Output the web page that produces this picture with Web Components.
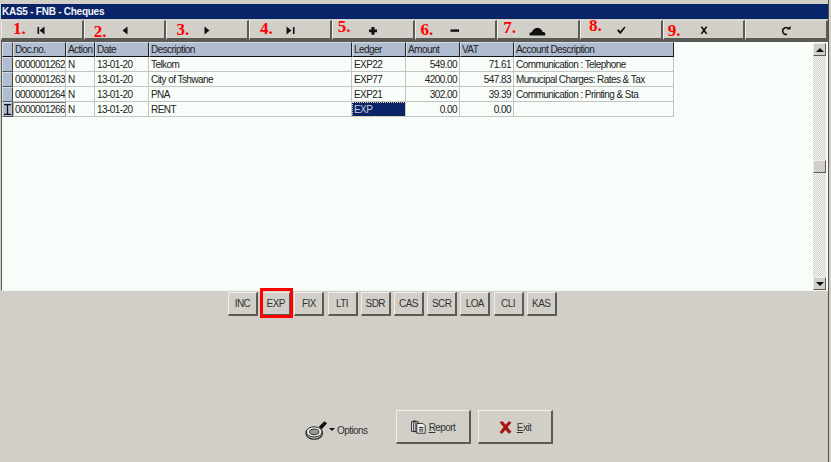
<!DOCTYPE html>
<html><head><meta charset="utf-8">
<style>
html,body{margin:0;padding:0;background:#d1cfc8;width:831px;height:462px;overflow:hidden;font-family:"Liberation Sans",Arial,sans-serif;font-size:10px;letter-spacing:-.56px;color:#222}
</style></head><body>
<app-window>
  <title-bar>KAS5 - FNB - Cheques</title-bar>
  <tool-bar>
    <tool-button num="1." nx="11" ny="0" icon="first"></tool-button>
    <tool-button num="2." nx="9" ny="3" icon="prev"></tool-button>
    <tool-button num="3." nx="9" ny="1" icon="next"></tool-button>
    <tool-button num="4." nx="10" ny="0" icon="last"></tool-button>
    <tool-button num="5." nx="5" ny="-2" icon="plus"></tool-button>
    <tool-button num="6." nx="5" ny="1" icon="minus"></tool-button>
    <tool-button num="7." nx="5" ny="-1" icon="cloud"></tool-button>
    <tool-button num="8." nx="8" ny="-3" icon="check"></tool-button>
    <tool-button num="9." nx="4" ny="2" icon="cross"></tool-button>
    <tool-button icon="redo"></tool-button>
  </tool-bar>
  <grid-pane></grid-pane>
  <tab-strip>
    <tab-button>INC</tab-button><tab-button marked>EXP</tab-button><tab-button>FIX</tab-button><tab-button>LTI</tab-button><tab-button>SDR</tab-button><tab-button>CAS</tab-button><tab-button>SCR</tab-button><tab-button>LOA</tab-button><tab-button>CLI</tab-button><tab-button>KAS</tab-button>
  </tab-strip>
  <action-row>
    <options-menu></options-menu>
    <action-button icon="report" key="R" rest="eport"></action-button>
    <action-button icon="exit" key="E" rest="xit"></action-button>
  </action-row>
</app-window>
<script>
function def(name, css, html){
  customElements.define(name, class extends HTMLElement{
    connectedCallback(){
      if(this.shadowRoot) return;
      const r=this.attachShadow({mode:'open'});
      r.innerHTML='<style>'+css+'</style>'+html;
    }
  });
}
const FACE='#d1cfc8';
const bevel='border-style:solid;border-width:1px;border-color:#eeede9 #5c5a54 #5c5a54 #eeede9;';
def('app-window',`:host{display:flex;flex-direction:column;width:829px;height:462px;box-sizing:border-box;padding:4px 0 0 1px;background:${FACE};border-right:1px solid #55534e}`,'<slot></slot>');
def('title-bar',`:host{display:block;height:15px;line-height:15px;background:#0a246a;color:#f4f4f8;font-weight:bold;font-size:10px;padding-left:1px;letter-spacing:-.25px;white-space:nowrap}`,'<slot></slot>');
def('tool-bar',`:host{display:flex;height:20px;margin-top:1px}`,'<slot></slot>');
const ICONS={
 first:'<path d="M0 1h1.600v7H0zM7 .5v8L2 4.500z" fill="#111"/>',
 prev:'<path d="M7 .5v8L2 4.500z" fill="#111"/>',
 next:'<path d="M2 .5v8l5-4z" fill="#111"/>',
 last:'<path d="M7.400 1H9v7H7.400zM1 .5v8l5-4z" fill="#111"/>',
 plus:'<path d="M3 1h3v2.400h2.500v2.800H6v2.600H3V6.200H.5V3.400H3z" fill="#111"/>',
 minus:'<path d="M0 3.400h8.500v2.400H0z" fill="#111"/>',
 cloud:'<path d="M-3.500 9.500c-1.500-2 0-3.200 1.800-3.300C-.8 4 1 1.700 4 1.700c3 0 4.600 2.300 5.200 4.400 2.200 0 3.400 1.600 2.300 3.400z" fill="#111"/>',
 check:'<path d="M.5 4.500l1.500-1.200 1.700 2L8 .5l1 .9-5.200 6.800z" fill="#111"/>',
 cross:'<path d="M2.200 1l1.300-.7 2 2.500 2-2.500 1.300.7-2.300 3.300 2.300 3.300-1.300.7-2-2.500-2 2.500-1.300-.7 2.300-3.300z" fill="#111"/>',
 redo:'<path d="M7.500 3.300A3.400 3.400 0 1 0 5.500 8.300" fill="none" stroke="#111" stroke-width="1.500"/><path d="M5.200 3.300h4V0z" fill="#111"/>'
};
customElements.define('tool-button',class extends HTMLElement{
  connectedCallback(){
    if(this.shadowRoot) return;
    const r=this.attachShadow({mode:'open'});
    const a=k=>this.getAttribute(k);
    r.innerHTML=`<style>:host{display:flex;position:relative;flex:1 1 0;min-width:0;align-items:center;justify-content:center;box-sizing:border-box;background:${FACE};${bevel}border-width:1px 2px 2px 1px;border-top-color:#dcdad4}
    svg{width:10px;height:9px;overflow:visible;margin-top:1px}
    b{position:absolute;font:bold 17px/15px "Liberation Serif",serif;letter-spacing:0;color:#f00;left:${a('nx')}px;top:${a('ny')}px}</style>
    ${a('num')?`<b>${a('num')}</b>`:''}<svg viewBox="0 0 9 9">${ICONS[a('icon')]}</svg>`;
  }
});
const COLS='11px 53px 29px 54px 203px 54px 54px 54px 160px';
const HEAD=['','Doc.no.','Action','Date','Description','Ledger','Amount','VAT','Account Description'];
const ROWS=[
 ['0000001262','N','13-01-20','Telkom','EXP22','549.00','71.61','Communication : Telephone'],
 ['0000001263','N','13-01-20','City of Tshwane','EXP77','4200.00','547.83','Munucipal Charges: Rates &amp; Tax'],
 ['0000001264','N','13-01-20','PNA','EXP21','302.00','39.39','Communication : Printing &amp; Sta'],
 ['0000001266','N','13-01-20','RENT','EXP','0.00','0.00','']
];
customElements.define('grid-pane',class extends HTMLElement{
  connectedCallback(){
    if(this.shadowRoot) return;
    const r=this.attachShadow({mode:'open'});
    let cells=HEAD.map((h,i)=>`<div class="h${i==0?' ind':''}">${h}</div>`).join('');
    ROWS.forEach((row,ri)=>{
      cells+=`<div class="ind">${ri==3?'<svg width="7" height="11" viewBox="0 0 7 11"><path d="M0 .5h7M0 10.500h7M3.500 .5v10" stroke="#111" stroke-width="1.300" fill="none"/></svg>':''}</div>`;
      row.forEach((c,i)=>{
        const idx=i+1;
        let k='c';
        if(idx==6||idx==7) k+=' num';
        if(ri==3&&idx==5) k+=' sel';
        if(ri==3&&idx==1) k+=' edit';
        cells+=`<div class="${k}">${c}</div>`;
      });
    });
    r.innerHTML=`<style>
    :host{display:flex;height:251px;background:#f8fdf9;box-sizing:border-box;border-top:2px solid #5c5a54;border-left:1px solid #5c5a54;border-bottom:1px solid #f4f3ef}
    .table{flex:0 0 672px;display:grid;grid-template-columns:${COLS};grid-auto-rows:15px;align-self:start}
    .table>div{box-sizing:border-box;height:15px;line-height:16px;padding:0 1px 0 2px;white-space:nowrap;overflow:hidden}
    .h{background:#b0bcd0;border-right:1px solid #222;border-bottom:1px solid #111;color:#222;border-left:1px solid #d6dce6;border-top:1px solid #d6dce6;padding-left:1px!important;line-height:14px!important}
    .c{border-right:1px solid #c4c4c0;border-bottom:1px solid #c4c4c0;color:#222}
    .ind{background:#b0bcd0;border-right:1px solid #444!important;border-bottom:1px solid #555;display:flex;align-items:center;justify-content:center;border-left:1px solid #d6dce6;border-top:1px solid #d6dce6;padding:0!important}
    .h.ind{border-bottom:1px solid #111}
    .num{text-align:right;padding-right:2px!important}
    .sel{background:#0a246a;color:#ccd;outline:1px dotted #e8d8a0;outline-offset:-1px}
    .edit{border:1px solid #aaa;border-top-color:#777;padding-left:1px!important;line-height:14px!important}
    .spacer{flex:1}
    </style><div class="table">${cells}</div><div class="spacer"></div><v-scroll></v-scroll>`;
  }
});
def('v-scroll',`:host{display:flex;flex-direction:column;flex:0 0 13px;margin:1px 2px 0 0;height:247px;
  background-color:#e4e2dd;background-image:conic-gradient(#cfcdc6 25%,#fafaf8 0 50%,#cfcdc6 0 75%,#fafaf8 0);background-size:2px 2px}
  .b{height:13px;box-sizing:border-box;background:${FACE};${bevel}display:flex;align-items:center;justify-content:center}
  .t{flex:0 0 104px}.s{flex:1}
  i{width:0;height:0;border:4px solid transparent;border-top:0;border-bottom:4px solid #111}
  i.d{border-bottom:0;border-top:4px solid #111}`,
  '<div class="b"><i></i></div><div class="t"></div><div class="b"></div><div class="s"></div><div class="b"><i class="d"></i></div>');
def('tab-strip',`:host{display:flex;gap:3.2px;padding:1px 0 0 227px;height:24px}`,'<slot></slot>');
customElements.define('tab-button',class extends HTMLElement{
  connectedCallback(){
    if(this.shadowRoot) return;
    const r=this.attachShadow({mode:'open'});
    r.innerHTML=`<style>:host{display:flex;position:relative;box-sizing:border-box;width:30px;height:24px;align-items:center;justify-content:center;background:${FACE};${bevel}border-width:1px 2px 2px 1px;color:#333}
    u{position:absolute;left:-2px;top:-5px;width:33px;height:30px;box-sizing:border-box;border:3px solid #f00;pointer-events:none}</style><slot></slot>${this.hasAttribute('marked')?'<u></u>':''}`;
  }
});
def('action-row',`:host{display:flex;align-items:flex-start;margin-top:94px;padding-left:304px;height:35px}`,'<slot></slot>');
def('options-menu',`:host{display:flex;align-items:center;width:91px;height:35px;color:#333}
  svg{width:23px;height:21px;margin-top:6px;flex:none}
  i{width:0;height:0;border:3px solid transparent;border-bottom:0;border-top:3px solid #111;margin:3px 2px 0 1px}
  span{margin-top:6px}`,
  `<svg viewBox="0 0 25 22"><path d="M15 7l6-6 3 2-6 7z" fill="#111"/><ellipse cx="10" cy="14" rx="9" ry="6.500" fill="#bbb" stroke="#222" stroke-width="1.200"/><ellipse cx="10" cy="12.500" rx="8.500" ry="5.500" fill="#e8e8e4" stroke="#222"/><ellipse cx="10" cy="12.500" rx="5" ry="3" fill="#9a9a96" stroke="#222"/></svg><i></i><span>Options</span>`);
const AI={
 report:'<svg width="16" height="14" viewBox="0 0 18 15"><path d="M.5 1.500h5v11h-5zM3 .5l5 1v12l-5-1z" fill="#ddd" stroke="#222"/><path d="M6.500 3.500h7l2.500 2.500v8.500h-9.500z" fill="#eee" stroke="#222"/><path d="M9 8h5M9 10h5M9 12h5" stroke="#222"/></svg>',
 exit:'<svg width="13" height="13" viewBox="0 0 15 15"><path d="M1 1.500l3-1 3.500 4L11.500.5l2.500 1.500-4.500 5L14 12.500l-2.500 2-4-4.500-4 4.500L1 13l4.500-6z" fill="#b01010" stroke="#7a0c0c" stroke-width=".5"/></svg>'
};
customElements.define('action-button',class extends HTMLElement{
  connectedCallback(){
    if(this.shadowRoot) return;
    const r=this.attachShadow({mode:'open'});
    const a=k=>this.getAttribute(k);
    r.innerHTML=`<style>:host{display:flex;box-sizing:border-box;width:75px;height:34px;margin-right:7px;align-items:center;justify-content:center;gap:${a('icon')=='exit'?5:2}px;background:${FACE};${bevel}border-width:1px 2px 2px 1px;color:#333}span{margin-top:2px}svg{margin-top:1px}</style>${AI[a('icon')]}<span><u>${a('key')}</u>${a('rest')}</span>`;
  }
});
</script>
</body></html>
